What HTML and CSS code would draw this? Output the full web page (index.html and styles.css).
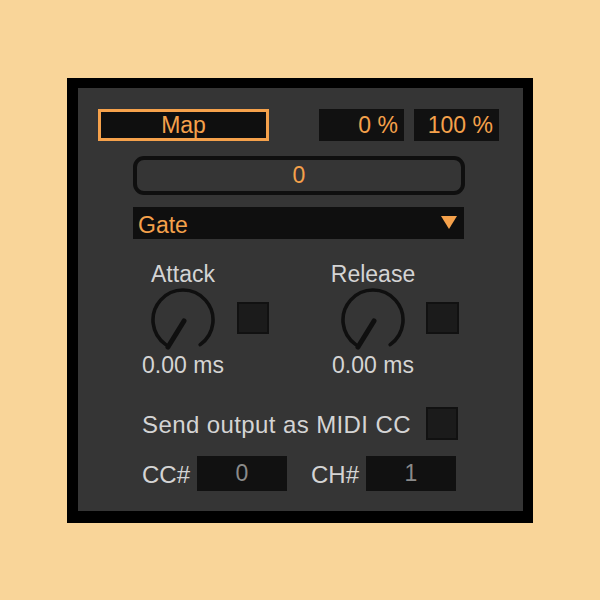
FILE: index.html
```html
<!DOCTYPE html>
<html>
<head>
<meta charset="utf-8">
<link rel="stylesheet" href="styles.css">
</head>
<body>
<div class="device">
  <div class="panel">
    <div class="toprow">
      <div class="map">Map</div>
      <div class="pct first">0 %</div>
      <div class="pct">100 %</div>
    </div>
    <div class="numbox">0</div>
    <div class="menu"><span>Gate</span><svg class="tri" width="16" height="13" viewBox="0 0 16 13"><polygon points="0,0 16,0 8,13" fill="#f5a14b"/></svg></div>
    <div class="dials">
      <div class="group">
        <div class="dialcol">
          <div class="lbl">Attack</div>
          <svg class="knob" width="66" height="64" viewBox="0 0 66 64">
            <path d="M15.8 56.6 A30 30 0 1 1 50.2 56.6" fill="none" stroke="#0f0f0f" stroke-width="3.6" stroke-linecap="round"/>
            <line x1="34" y1="33" x2="18" y2="59" stroke="#0f0f0f" stroke-width="5" stroke-linecap="round"/>
          </svg>
          <div class="val">0.00 ms</div>
        </div>
        <div class="check"></div>
      </div>
      <div class="group second">
        <div class="dialcol">
          <div class="lbl">Release</div>
          <svg class="knob" width="66" height="64" viewBox="0 0 66 64">
            <path d="M15.8 56.6 A30 30 0 1 1 50.2 56.6" fill="none" stroke="#0f0f0f" stroke-width="3.6" stroke-linecap="round"/>
            <line x1="34" y1="33" x2="18" y2="59" stroke="#0f0f0f" stroke-width="5" stroke-linecap="round"/>
          </svg>
          <div class="val">0.00 ms</div>
        </div>
        <div class="check"></div>
      </div>
    </div>
    <div class="sendrow">
      <span class="sendtxt">Send output as MIDI CC</span>
      <div class="check"></div>
    </div>
    <div class="ccrow">
      <span class="cclbl">CC#</span>
      <div class="field">0</div>
      <span class="cclbl ch">CH#</span>
      <div class="field">1</div>
    </div>
  </div>
</div>
</body>
</html>
```
FILE: styles.css
```css
html, body {
  margin: 0;
  padding: 0;
  background: #f9d599;
  width: 600px;
  height: 600px;
  overflow: hidden;
}
body {
  padding: 78px 0 0 67px;
  box-sizing: border-box;
  font-family: "Liberation Sans", Arial, sans-serif;
}
.device {
  width: 466px;
  box-sizing: border-box;
  border-style: solid;
  border-color: #000;
  border-width: 10px 10px 12px 11px;
}
.panel {
  background: #353535;
  height: 423px;
  box-sizing: border-box;
  padding-top: 21px;
  color: #d4d4d4;
  font-size: 23px;
}
.toprow {
  display: flex;
  height: 32px;
}
.map {
  margin-left: 20px;
  width: 171px;
  height: 32px;
  box-sizing: border-box;
  border: 3px solid #f5a14b;
  background: #0f0f0f;
  color: #f5a14b;
  text-align: center;
  line-height: 27px;
}
.pct {
  width: 85px;
  height: 32px;
  background: #111;
  color: #f5a14b;
  text-align: right;
  box-sizing: border-box;
  padding-right: 6px;
  line-height: 32px;
  margin-left: 10px;
}
.pct.first {
  margin-left: 50px;
}
.numbox {
  margin: 15px 0 0 55px;
  width: 332px;
  height: 39px;
  box-sizing: border-box;
  border: 4px solid #0f0f0f;
  border-radius: 11px;
  color: #f5a14b;
  text-align: center;
  line-height: 31px;
}
.menu {
  margin: 12px 0 0 55px;
  width: 331px;
  height: 32px;
  background: #0f0f0f;
  color: #f5a14b;
  display: flex;
  align-items: center;
  justify-content: space-between;
  box-sizing: border-box;
  padding: 5px 7px 0 5px;
}
.tri {
  margin-top: -7px;
}
.dials {
  display: flex;
  margin-top: 22px;
}
.group {
  display: flex;
  align-items: flex-start;
  margin-left: 55px;
}
.group.second {
  margin-left: 54px;
}
.dialcol {
  width: 100px;
  display: flex;
  flex-direction: column;
  align-items: center;
}
.lbl, .val {
  line-height: 26px;
  height: 26px;
  white-space: nowrap;
}
.knob {
  display: block;
  margin-top: 1px;
}
.check {
  width: 32px;
  height: 32px;
  box-sizing: border-box;
  border: 2px solid #111;
  background: #1b1b1b;
  margin-top: 41px;
  margin-left: 4px;
}
.group.second .check {
  margin-left: 3px;
  width: 33px;
}
.sendrow {
  display: flex;
  align-items: center;
  margin-top: 29px;
  height: 33px;
}
.sendtxt {
  margin-left: 64px;
  width: 284px;
  white-space: nowrap;
  font-size: 24px;
  letter-spacing: 0.4px;
  padding-top: 3px;
}
.sendrow .check {
  margin: 0;
  height: 33px;
}
.ccrow {
  display: flex;
  align-items: center;
  margin-top: 16px;
  height: 35px;
}
.cclbl {
  margin-left: 64px;
  width: 55px;
  font-size: 24px;
  padding-top: 3px;
}
.cclbl.ch {
  margin-left: 24px;
}
.field {
  width: 90px;
  height: 35px;
  background: #111;
  color: #8a8a8a;
  text-align: center;
  line-height: 35px;
}
```
